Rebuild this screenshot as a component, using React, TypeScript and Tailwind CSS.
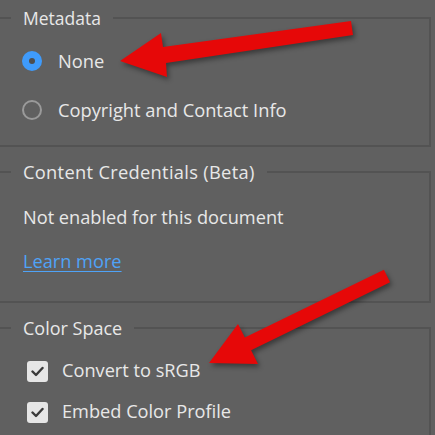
import React from "react";

const font = { fontFamily: '"Open Sans", "Liberation Sans", sans-serif' };

function Radio({ checked }: { checked?: boolean }) {
  return checked ? (
    <span className="w-[20px] h-[20px] rounded-full bg-[#3f9bfb] flex items-center justify-center shrink-0">
      <span className="w-[6px] h-[6px] rounded-full bg-[#4e4e4e]" />
    </span>
  ) : (
    <span className="w-[20px] h-[20px] rounded-full border-[2.5px] border-[#9a9a9a] shrink-0" />
  );
}

function Check() {
  return (
    <span className="w-[21px] h-[21px] rounded-[3px] bg-[#e6e6e6] flex items-center justify-center shrink-0">
      <svg width="13" height="11" viewBox="0 0 13 11">
        <polyline points="1.5,5.5 5,9 11.5,2" fill="none" stroke="#3a3a3a" strokeWidth="2.4" strokeLinecap="round" strokeLinejoin="round" />
      </svg>
    </span>
  );
}

export default function App() {
  return (
    <div className="relative w-[435px] h-[435px] overflow-hidden bg-[#606060] text-[#e8e8e8] font-medium" style={font}>
      <div className="flex flex-col pt-[6px] gap-[13px]">
        <fieldset className="-ml-[20px] w-[451px] border-2 border-[#535353] pl-[41px] pt-[17px] pb-[21px]">
          <legend className="-ml-[12px] px-[12px] text-[17.5px] leading-[24px]">Metadata</legend>
          <div className="flex flex-col gap-[21px]">
            <div className="flex items-center h-[28px] gap-[16px] -ml-[1px] text-[18.3px]">
              <Radio checked />
              <span>None</span>
            </div>
            <div className="flex items-center h-[28px] gap-[16px] -ml-[1px] text-[18.3px]">
              <Radio />
              <span>Copyright and Contact Info</span>
            </div>
          </div>
        </fieldset>
        <fieldset className="-ml-[20px] w-[451px] border-2 border-[#535353] pl-[41px] pt-[20px] pb-[25px]">
          <legend className="-ml-[12px] px-[12px] text-[18.3px] leading-[24px] tracking-[0.3px]">Content Credentials (Beta)</legend>
          <div className="flex flex-col gap-[16px]">
            <div className="h-[28px] flex items-center text-[18.2px]">Not enabled for this document</div>
            <div className="h-[28px] flex items-center text-[18.2px]">
              <a className="text-[#4fa3f7] underline underline-offset-[3px]">Learn more</a>
            </div>
          </div>
        </fieldset>
        <fieldset className="-ml-[20px] w-[451px] h-[200px] border-2 border-[#535353] pl-[41px] pt-[17px]">
          <legend className="-ml-[12px] px-[12px] text-[18px] leading-[24px]">Color Space</legend>
          <div className="flex flex-col gap-[13px]">
            <div className="flex items-center h-[28px] gap-[14px] ml-[4px] text-[18.2px]">
              <Check />
              <span>Convert to sRGB</span>
            </div>
            <div className="flex items-center h-[28px] gap-[14px] ml-[4px] text-[18.2px]">
              <Check />
              <span>Embed Color Profile</span>
            </div>
          </div>
        </fieldset>
      </div>
      <svg
        className="absolute inset-0 pointer-events-none"
        width="435"
        height="435"
        viewBox="0 0 435 435"
        style={{ filter: "drop-shadow(2px 3px 2.5px rgba(0,0,0,0.4))" }}
      >
        <polygon
          points="120,61 161,33 163,47 351,21 353,35 166,63 167,77"
          fill="#e60808"
        />
        <polygon
          points="209,363 238,324 244.8,337.6 383.9,269.7 390.1,282.3 251.1,350.2 258,364"
          fill="#e60808"
        />
      </svg>
    </div>
  );
}
